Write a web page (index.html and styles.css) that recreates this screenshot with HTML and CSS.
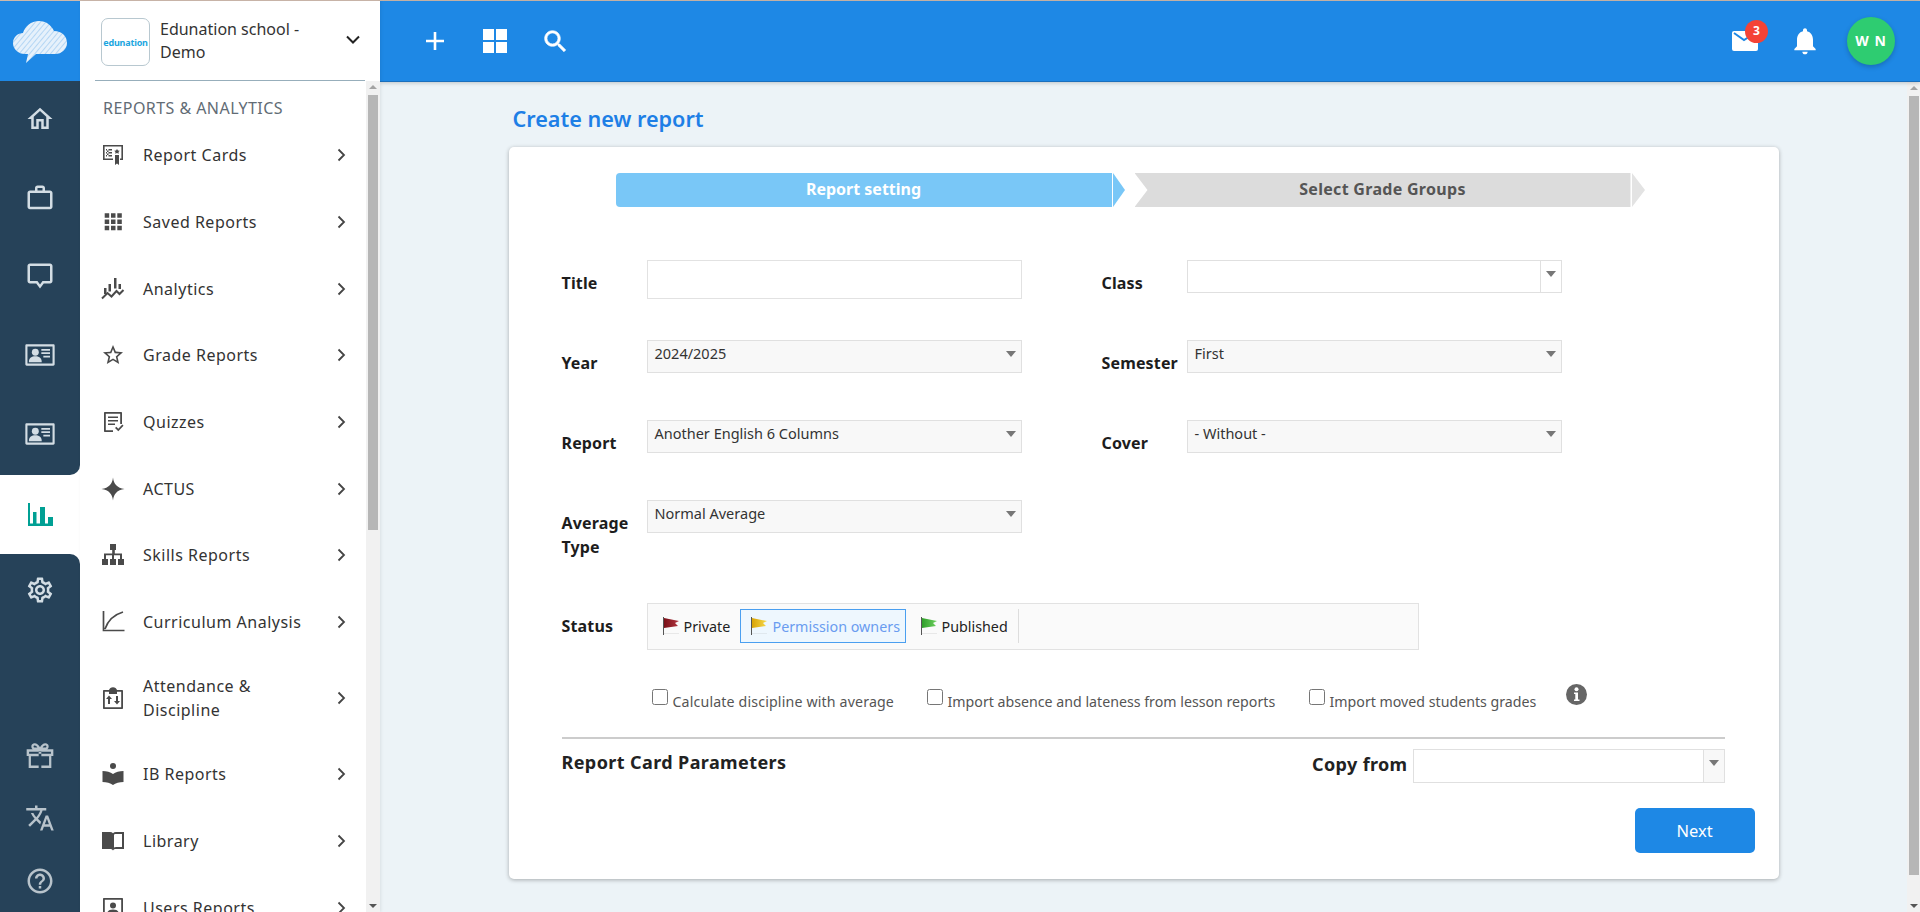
FILE: index.html
```html
<!DOCTYPE html>
<html lang="en">
<head>
<meta charset="utf-8">
<title>Create new report</title>
<link rel="stylesheet" href="styles.css">
</head>
<body>
<div class="topline"></div>
<div class="app">
  <nav class="rail">
    <div class="rail-logo">
      <svg width="56" height="46" viewBox="0 0 56 46"><defs><pattern id="sk" width="4" height="4" patternUnits="userSpaceOnUse" patternTransform="rotate(-50)"><rect width="4" height="4" fill="#e6f1fb"/><rect width="4" height="1" fill="#b4d6f4"/></pattern></defs><path d="M13 36C6 36 1 31 1 25c0-6 5-10 10-10 2-7 8-12 16-12 7 0 12 4 15 10 8 0 13 5 13 12 0 6-5 11-12 11H24l-10 9 2-9z" fill="url(#sk)"/></svg>
    </div>
    <div class="rail-group rail-top">
      <div class="rail-item"><svg class="ri" width="30" height="30" viewBox="0 0 24 24"><path d="M12 5.69l5 4.5V18h-2v-6H9v6H7v-7.81l5-4.5M12 3L2 12h3v8h6v-6h2v6h6v-8h3L12 3z"/></svg></div>
      <div class="rail-item"><svg class="ri" width="30" height="30" viewBox="0 0 24 24"><path d="M14 6V4h-4v2h4zM4 8v11h16V8H4zm16-2c1.11 0 2 .89 2 2v11c0 1.11-.89 2-2 2H4c-1.11 0-2-.89-2-2l.01-11c0-1.11.88-2 1.99-2h4V4c0-1.11.89-2 2-2h4c1.11 0 2 .89 2 2v2h4z"/></svg></div>
      <div class="rail-item"><svg class="ri" width="30" height="30" viewBox="0 0 24 24"><path d="M4 2h16c1.1 0 2 .9 2 2v12c0 1.1-.9 2-2 2h-5l-3 4-3-4H4c-1.1 0-2-.9-2-2V4c0-1.1.9-2 2-2zm0 2v12h6l2 2.7 2-2.7h6V4H4z"/></svg></div>
      <div class="rail-item"><svg class="ri" width="32" height="32" viewBox="0 0 24 24"><path d="M2 4h20c.6 0 1 .4 1 1v14c0 .6-.4 1-1 1H2c-.6 0-1-.4-1-1V5c0-.6.4-1 1-1zm.6 1.6v12.8h18.8V5.6H2.600z"/><circle cx="8.500" cy="10" r="2.600"/><path d="M3.700 17c0-2.600 2.200-4 4.800-4s4.800 1.400 4.800 4v.4H3.700zM13 7.500h6.500v1.300H13zM13 10h6.500v1.300H13zM14.500 12.500h5v1.300h-5z"/></svg></div>
      <div class="rail-item"><svg class="ri" width="32" height="32" viewBox="0 0 24 24"><path d="M2 4h20c.6 0 1 .4 1 1v14c0 .6-.4 1-1 1H2c-.6 0-1-.4-1-1V5c0-.6.4-1 1-1zm.6 1.6v12.8h18.8V5.6H2.600z"/><circle cx="8.500" cy="10" r="2.600"/><path d="M3.700 17c0-2.600 2.200-4 4.800-4s4.800 1.400 4.800 4v.4H3.700zM13 7.500h6.500v1.300H13zM13 10h6.500v1.300H13zM14.500 12.500h5v1.300h-5z"/></svg></div>
    </div>
    <div class="rail-active">
      <svg width="26" height="23" viewBox="0 0 26 23"><path class="teal" d="M1 0h2v20.500h3V9h3.500v11.500H13V4h5v16.500h3V14h5v9H1z"/></svg>
    </div>
    <div class="rail-group rail-bottom">
      <div class="rail-gear"><svg class="ri" width="30" height="30" viewBox="0 0 24 24"><path d="M19.430 12.980c.04-.32.07-.64.07-.98 0-.34-.03-.66-.07-.98l2.110-1.650c.19-.15.24-.42.12-.64l-2-3.460c-.09-.16-.26-.25-.44-.25-.06 0-.12.01-.17.03l-2.490 1c-.52-.4-1.080-.73-1.690-.98l-.38-2.650C14.460 2.180 14.250 2 14 2h-4c-.25 0-.46.18-.49.42l-.38 2.650c-.61.25-1.170.59-1.690.98l-2.490-1c-.06-.02-.12-.03-.18-.03-.17 0-.34.09-.43.25l-2 3.460c-.13.22-.07.49.12.64l2.110 1.650c-.04.32-.07.65-.07.98 0 .33.03.66.07.98l-2.110 1.650c-.19.15-.24.42-.12.64l2 3.460c.09.16.26.25.44.25.06 0 .12-.01.17-.03l2.490-1c.52.4 1.080.73 1.690.98l.38 2.650c.03.24.24.42.49.42h4c.25 0 .46-.18.49-.42l.38-2.650c.61-.25 1.170-.59 1.690-.98l2.490 1c.06.02.12.03.18.03.17 0 .34-.09.43-.25l2-3.460c.12-.22.07-.49-.12-.64l-2.110-1.650zm-1.980-1.710c.04.31.05.52.05.73 0 .21-.02.43-.05.73l-.14 1.130.89.7 1.080.84-.7 1.210-1.270-.51-1.040-.42-.9.68c-.43.32-.84.56-1.250.73l-1.060.43-.16 1.130-.2 1.350h-1.400l-.19-1.350-.16-1.130-1.060-.43c-.43-.18-.83-.41-1.230-.71l-.91-.7-1.060.43-1.270.51-.7-1.210 1.080-.84.89-.7-.14-1.130c-.03-.31-.05-.54-.05-.74s.02-.43.05-.73l.14-1.130-.89-.7-1.080-.84.7-1.210 1.270.51 1.040.42.9-.68c.43-.32.84-.56 1.250-.73l1.060-.43.16-1.130.2-1.350h1.390l.19 1.350.16 1.130 1.060.43c.43.18.83.41 1.230.71l.91.7 1.060-.43 1.270-.51.7 1.210-1.070.85-.89.7.14 1.130zM12 8c-2.210 0-4 1.790-4 4s1.790 4 4 4 4-1.790 4-4-1.790-4-4-4zm0 6c-1.100 0-2-.9-2-2s.9-2 2-2 2 .9 2 2-.9 2-2 2z"/></svg></div>
      <div class="rail-foot">
        <div class="rail-small"><svg class="rs" width="32" height="32" viewBox="0 0 24 24"><path d="M2 7h20v5h-1.500v9h-17v-9H2zm1.800 1.800v1.600h16.400V8.800zm1.400 3.400v7h5.800v-7zm7.800 0v7h5.800v-7zM11 8.500V21h2V8.500zM8 2.500c1.600 0 3.200 1.500 4 3 .8-1.500 2.400-3 4-3 1.500 0 2.500 1 2.500 2.300 0 .9-.4 1.700-1 2.200H6.500c-.6-.5-1-1.300-1-2.200 0-1.300 1-2.300 2.500-2.300zm0 1.700c-.5 0-.8.3-.8.7 0 .5.3.8.8.8h2c-.4-.8-1.200-1.500-2-1.500zm8 0c-.8 0-1.600.7-2 1.500h2c.5 0 .8-.3.8-.8 0-.4-.3-.7-.8-.7z"/></svg></div>
        <div class="rail-small"><svg class="rs" width="30" height="30" viewBox="0 0 24 24"><path d="M12.870 15.070l-2.540-2.510.03-.03c1.740-1.940 2.980-4.170 3.710-6.530H17V4h-7V2H8v2H1v1.990h11.170C11.500 7.920 10.440 9.750 9 11.350 8.070 10.320 7.300 9.190 6.690 8h-2c.73 1.630 1.730 3.170 2.980 4.560l-5.090 5.020L4 19l5-5 3.110 3.110.76-2.040zM18.500 10h-2L12 22h2l1.120-3h4.750L21 22h2l-4.500-12zm-2.620 7l1.620-4.330L19.120 17h-3.240z"/></svg></div>
        <div class="rail-small"><svg class="rs" width="30" height="30" viewBox="0 0 24 24"><path d="M11 18h2v-2h-2v2zm1-16C6.480 2 2 6.480 2 12s4.480 10 10 10 10-4.480 10-10S17.520 2 12 2zm0 18c-4.410 0-8-3.590-8-8s3.590-8 8-8 8 3.590 8 8-3.590 8-8 8zm0-14c-2.210 0-4 1.790-4 4h2c0-1.100.9-2 2-2s2 .9 2 2c0 2-3 1.750-3 5h2c0-2.250 3-2.500 3-5 0-2.210-1.790-4-4-4z"/></svg></div>
      </div>
    </div>
  </nav>

  <aside class="side">
    <div class="side-head">
      <div class="school-logo"><span>edunation</span></div>
      <div class="school-name">Edunation school -<br>Demo</div>
      <svg class="school-caret" width="14" height="9" viewBox="0 0 14 9"><path d="M1 1.500l6 6 6-6" fill="none" stroke="#222" stroke-width="2"/></svg>
    </div>
    <div class="side-rule"></div>
    <div class="side-body">
      <div class="side-list">
        <div class="side-title">REPORTS &amp; ANALYTICS</div>
        <a class="side-item"><svg class="si" viewBox="0 0 24 24"><path d="M2 2h20v15h-3v-1.600h1.400V3.600H3.600v11.800H12V17H2zM5 6h6v1.500H5zm0 3h6v1.500H5zm0 3h6v1.500H5zM6 6v7.500h1.500V6zm10 0l1 1.500 1.800.2-1.300 1.300.3 1.800-1.800-.8-1.800.8.3-1.800L13.200 7.700l1.800-.2zM14 12h4v10l-2-1.500-2 1.500z"/></svg><span class="si-text">Report Cards</span><svg class="chev" viewBox="0 0 9 14"><path d="M1.500 1.500L7 7l-5.500 5.500" /></svg></a>
        <a class="side-item"><svg class="si" viewBox="0 0 24 24"><path d="M3 3h5v5H3zm7 0h5v5h-5zm7 0h5v5h-5zM3 10h5v5H3zm7 0h5v5h-5zm7 0h5v5h-5zM3 17h5v5H3zm7 0h5v5h-5zm7 0h5v5h-5z" transform="translate(1 .5) scale(.9)"/></svg><span class="si-text">Saved Reports</span><svg class="chev" viewBox="0 0 9 14"><path d="M1.500 1.500L7 7l-5.500 5.500" /></svg></a>
        <a class="side-item"><svg class="si" viewBox="0 0 24 24"><path d="M3 11h2.500v6H3zm4.500-4H10v7.500H7.500zM13 1h2.500v10.500H13zm4.500 6H20v5h-2.500z"/><path d="M1 21.500l5.500-5.500 4 3.500 5-5.500 3 3 4-4" fill="none" stroke="#4a4a4a" stroke-width="2"/></svg><span class="si-text">Analytics</span><svg class="chev" viewBox="0 0 9 14"><path d="M1.500 1.500L7 7l-5.500 5.500" /></svg></a>
        <a class="side-item"><svg class="si" viewBox="0 0 24 24"><path d="M22 9.240l-7.190-.62L12 2 9.190 8.630 2 9.240l5.460 4.730L5.820 21 12 17.270 18.180 21l-1.630-7.030L22 9.240zM12 15.400l-3.760 2.270 1-4.280-3.320-2.880 4.380-.38L12 6.100l1.710 4.040 4.380.38-3.320 2.880 1 4.280L12 15.400z"/></svg><span class="si-text">Grade Reports</span><svg class="chev" viewBox="0 0 9 14"><path d="M1.500 1.500L7 7l-5.500 5.500" /></svg></a>
        <a class="side-item"><svg class="si" viewBox="0 0 24 24"><path d="M4 2h16c.6 0 1 .4 1 1v11h-1.800V3.800H4.800v16.400H12V22H4c-.6 0-1-.4-1-1V3c0-.6.4-1 1-1zm3 4.500h10V8H7zm0 3.500h10v1.500H7zm0 3.500h7V15H7zm7 4.500l1.300-1.300 2 2 4-4.200 1.200 1.200-5.200 5.500z"/></svg><span class="si-text">Quizzes</span><svg class="chev" viewBox="0 0 9 14"><path d="M1.500 1.500L7 7l-5.500 5.500" /></svg></a>
        <a class="side-item"><svg class="si" viewBox="0 0 24 24"><path d="M12 .5c.8 6.800 4 10.300 11.500 11.500C16 13.200 12.800 16.700 12 23.500 11.200 16.700 8 13.200.5 12 8 10.800 11.200 7.300 12 .5z"/></svg><span class="si-text">ACTUS</span><svg class="chev" viewBox="0 0 9 14"><path d="M1.500 1.500L7 7l-5.500 5.500" /></svg></a>
        <a class="side-item"><svg class="si" viewBox="0 0 24 24"><path d="M9 1h6v6h-1.200v3.500H21V16h2v6h-6v-6h2v-3.800h-6V16h2v6H9v-6h2v-3.800H5V16h2v6H1v-6h2v-5.500h8.200V7H9z"/></svg><span class="si-text">Skills Reports</span><svg class="chev" viewBox="0 0 9 14"><path d="M1.500 1.500L7 7l-5.500 5.500" /></svg></a>
        <a class="side-item"><svg class="si" viewBox="0 0 24 24"><path d="M2.500 1v19.500H23.500M4 19c3-9 8-14 18-17" fill="none" stroke="#4a4a4a" stroke-width="1.700"/></svg><span class="si-text">Curriculum Analysis</span><svg class="chev" viewBox="0 0 9 14"><path d="M1.500 1.500L7 7l-5.500 5.500" /></svg></a>
        <a class="side-item"><svg class="si" viewBox="0 0 24 24"><path d="M3 4h5c.5-1.700 2-2.800 4-2.800s3.500 1.100 4 2.800h5c.6 0 1 .4 1 1v17c0 .6-.4 1-1 1H3c-.6 0-1-.4-1-1V5c0-.6.4-1 1-1zm.8 1.800v15.400h16.400V5.800H16V8H8V5.800zM7 18v-5H5l3-3.500 3 3.500H9v5zm8-8h2v5h2l-3 3.500-3-3.500h2z"/></svg><span class="si-text">Attendance &amp;<br>Discipline</span><svg class="chev" viewBox="0 0 9 14"><path d="M1.500 1.500L7 7l-5.500 5.500" /></svg></a>
        <a class="side-item"><svg class="si" viewBox="0 0 24 24"><circle cx="12" cy="4" r="3"/><path d="M1.500 9c4 0 8 1 10.500 3 2.500-2 6.500-3 10.500-3v11c-4 0-8 1-10.500 3-2.500-2-6.500-3-10.500-3z"/></svg><span class="si-text">IB Reports</span><svg class="chev" viewBox="0 0 9 14"><path d="M1.500 1.500L7 7l-5.500 5.500" /></svg></a>
        <a class="side-item"><svg class="si" viewBox="0 0 24 24"><path d="M1 3h8c1.300 0 2.300.4 3 1.200C12.700 3.400 13.700 3 15 3h8v17h-8c-1.300 0-2.300.4-3 1.500-.7-1.100-1.700-1.500-3-1.500H1zm12 3v12.500c.6-.3 1.300-.5 2-.5h6V5h-6c-1.200 0-2 .4-2 1z"/></svg><span class="si-text">Library</span><svg class="chev" viewBox="0 0 9 14"><path d="M1.500 1.500L7 7l-5.500 5.500" /></svg></a>
        <a class="side-item"><svg class="si" viewBox="0 0 24 24"><path d="M3 2h18c.6 0 1 .4 1 1v18c0 .6-.4 1-1 1H3c-.6 0-1-.4-1-1V3c0-.6.4-1 1-1zm.8 1.800v16.400h16.400V3.800z"/><circle cx="12" cy="9.500" r="3"/><path d="M6 18c0-3 2.500-4.500 6-4.500s6 1.500 6 4.500z"/></svg><span class="si-text">Users Reports</span><svg class="chev" viewBox="0 0 9 14"><path d="M1.500 1.500L7 7l-5.500 5.500" /></svg></a>
      </div>
      <div class="bar bar-side"><i class="bar-up"></i><i class="bar-thumb"></i><i class="bar-down"></i></div>
    </div>
  </aside>

  <div class="main">
    <header class="top">
      <div class="top-left">
        <div class="top-ico"><svg width="20" height="20" viewBox="0 0 20 20"><path d="M8.700 1h2.600v7.700H19v2.600h-7.700V19H8.700v-7.700H1V8.700h7.700z" fill="#fff"/></svg></div>
        <div class="top-ico"><svg width="24" height="24" viewBox="0 0 24 24"><path d="M0 0h11v11H0zm13 0h11v11H13zM0 13h11v11H0zm13 0h11v11H13z" fill="#fff"/></svg></div>
        <div class="top-ico"><svg width="29" height="29" viewBox="0 0 24 24"><path d="M15.500 14h-.79l-.28-.27C15.410 12.590 16 11.110 16 9.500 16 5.910 13.090 3 9.500 3S3 5.910 3 9.500 5.910 16 9.500 16c1.610 0 3.090-.59 4.230-1.570l.27.28v.79l5 4.990L20.490 19l-4.990-5zm-6 0C7.010 14 5 11.990 5 9.500S7.010 5 9.500 5 14 7.010 14 9.500 11.990 14 9.500 14z" fill="#fff" stroke="#fff" stroke-width=".5"/></svg></div>
      </div>
      <div class="top-right">
        <div class="top-ico mail"><svg width="28" height="22" viewBox="0 0 28 22"><rect x="1" y="1" width="26" height="20" rx="2" fill="#fff"/><path d="M3 3l10 7 8-5" fill="none" stroke="#1e88e5" stroke-width="2"/></svg><span class="badge">3</span></div>
        <div class="top-ico"><svg width="32" height="32" viewBox="0 0 24 24"><path d="M12 22c1.100 0 2-.9 2-2h-4c0 1.100.9 2 2 2zm6-6v-5c0-3.070-1.630-5.640-4.500-6.320V4c0-.83-.67-1.500-1.500-1.500s-1.500.67-1.500 1.500v.68C7.640 5.360 6 7.920 6 11v5l-2 2v1h16v-1l-2-2z" fill="#fff"/></svg></div>
        <div class="avatar">W N</div>
      </div>
    </header>
    <div class="stage">
      <div class="content">
        <h1 class="page-title">Create new report</h1>
        <section class="card">
          <div class="steps">
            <div class="step step-on">Report setting</div><i class="tip tip-on"></i>
            <div class="step step-off">Select Grade Groups</div><i class="tip tip-off"></i>
          </div>
          <div class="form">
            <label class="lbl">Title</label><input class="inp" type="text">
            <span></span>
            <label class="lbl">Class</label><div class="sel sel-combo"><i class="cell"><b class="tri"></b></i></div>

            <label class="lbl">Year</label><div class="sel"><span>2024/2025</span><b class="tri"></b></div>
            <span></span>
            <label class="lbl">Semester</label><div class="sel"><span>First</span><b class="tri"></b></div>

            <label class="lbl">Report</label><div class="sel"><span>Another English 6 Columns</span><b class="tri"></b></div>
            <span></span>
            <label class="lbl">Cover</label><div class="sel"><span>- Without -</span><b class="tri"></b></div>

            <label class="lbl">Average Type</label><div class="sel"><span>Normal Average</span><b class="tri"></b></div>
          </div>
          <div class="status-row">
            <label class="lbl">Status</label>
            <div class="status">
              <div class="flag-btn"><svg width="17" height="18" viewBox="0 0 17 18"><defs><linearGradient id="fr" x1="0" x2="1"><stop offset="0" stop-color="#7a1018"/><stop offset="1" stop-color="#b23540"/></linearGradient></defs><path d="M0 0h1v18H0z" fill="#555"/><path d="M1 1l15 3-4 2 3 3-14 2z" fill="url(#fr)"/><path d="M1 16h15v1H1z" fill="#e8e8e8"/></svg>Private</div>
              <div class="flag-btn flag-on"><svg width="17" height="18" viewBox="0 0 17 18"><defs><linearGradient id="fy" x1="0" x2="1"><stop offset="0" stop-color="#d8a408"/><stop offset="1" stop-color="#f6d84a"/></linearGradient></defs><path d="M0 0h1v18H0z" fill="#555"/><path d="M1 1l15 3-4 2 3 3-14 2z" fill="url(#fy)"/><path d="M1 16h15v1H1z" fill="#e0e8ee"/></svg>Permission owners</div>
              <div class="flag-btn flag-last"><svg width="17" height="18" viewBox="0 0 17 18"><defs><linearGradient id="fg" x1="0" x2="1"><stop offset="0" stop-color="#2f9e2a"/><stop offset="1" stop-color="#6fd060"/></linearGradient></defs><path d="M0 0h1v18H0z" fill="#555"/><path d="M1 1l15 3-4 2 3 3-14 2z" fill="url(#fg)"/><path d="M1 16h15v1H1z" fill="#e8e8e8"/></svg>Published</div>
            </div>
          </div>
          <div class="checks">
            <label class="chk"><input type="checkbox"><span>Calculate discipline with average</span></label>
            <label class="chk"><input type="checkbox"><span>Import absence and lateness from lesson reports</span></label>
            <label class="chk"><input type="checkbox"><span>Import moved students grades</span></label>
            <svg class="info" width="21" height="21" viewBox="0 0 21 21"><circle cx="10.500" cy="10.500" r="10.500" fill="#666"/><circle cx="10.500" cy="5.300" r="2" fill="#fff"/><path d="M8 8.500h4v7h1.500V17h-5.500v-1.500h1.300V10H8z" fill="#fff"/></svg>
          </div>
          <div class="params">
            <h2 class="params-title">Report Card Parameters</h2>
            <div class="copy">
              <label class="copy-lbl">Copy from</label>
              <div class="sel sel-copy"><i class="cell cell-grey"><b class="tri"></b></i></div>
            </div>
          </div>
          <div class="actions"><button class="next" type="button">Next</button></div>
        </section>
      </div>
      <div class="bar bar-main"><i class="bar-up"></i><i class="bar-thumb"></i><i class="bar-down"></i></div>
    </div>
  </div>
</div>
</body>
</html>
```
FILE: styles.css
```css
* { box-sizing: border-box; }
html, body { margin: 0; height: 912px; overflow: hidden; }
body { font-family: "Noto Sans", "Open Sans", sans-serif; color: #333; background: #ecf3f7; }
.topline { height: 1px; background: #cdb9ac; }
.app { display: flex; height: 911px; }

/* rail */
.rail { width: 80px; flex: none; display: flex; flex-direction: column; background: #fff; }
.rail-logo { height: 80px; flex: none; background: #1e88e5; display: flex; align-items: center; justify-content: center; }
.rail-group { background: #264259; }
.rail-top { height: 394px; flex: none; border-bottom-right-radius: 10px; }
.rail-item { height: 78.8px; display: flex; align-items: center; justify-content: center; padding-bottom: 3px; }
.ri { fill: #d3dde4; }
.rs { fill: #b8c3cb; }
.rail-active { height: 79px; flex: none; display: flex; align-items: center; justify-content: center; }
.teal { fill: #00a094; }
.rail-bottom { flex: 1; border-top-right-radius: 10px; display: flex; flex-direction: column; }
.rail-gear { height: 72px; display: flex; align-items: center; justify-content: center; }
.rail-foot { margin-top: auto; }
.rail-small { height: 62.5px; display: flex; align-items: center; justify-content: center; }

/* sidebar */
.side { width: 300px; flex: none; background: #fff; display: flex; flex-direction: column; position: relative; z-index: 2; box-shadow: 1px 0 3px rgba(0,0,0,.08); }
.side-head { height: 79px; flex: none; display: flex; align-items: center; padding: 0 20px 0 21px; }
.school-logo { width: 49px; height: 48px; flex: none; border: 1px solid #b8c8d0; border-radius: 7px; display: flex; align-items: center; justify-content: center; margin-top: 3px; }
.school-logo span { font: 700 9px/1 "Noto Sans", sans-serif; color: #1ba6e0; letter-spacing: -.2px; }
.school-name { margin-left: 10px; flex: 1; font-size: 16px; line-height: 23px; color: #333; margin-top: 0; }
.school-caret { flex: none; margin-top: -2px; }
.side-rule { height: 1px; flex: none; margin: 0 15px; background: #97aebb; }
.side-body { flex: 1; display: flex; min-height: 0; }
.side-list { flex: 1; min-width: 0; overflow: hidden; padding-left: 23px; }
.side-title { height: 41px; padding-top: 15px; font-size: 16px; letter-spacing: .45px; line-height: 24px; color: #626c75; white-space: nowrap; }
.side-item { display: flex; align-items: center; min-height: 66.7px; padding: 18.700px 0; color: #333; font-size: 16px; letter-spacing: .5px; line-height: 24px; }
.si { width: 24px; height: 24px; flex: none; fill: #4a4a4a; margin-left: -2px; }
.si-text { margin-left: 18px; flex: 1; }
.chev { width: 9px; height: 14px; flex: none; margin-right: 20px; fill: none; stroke: #444; stroke-width: 1.800; }

/* scrollbars */
.bar { flex: none; display: flex; flex-direction: column; align-items: center; background: #f1f1f1; }
.bar-side { width: 14px; }
.bar-main { width: 13px; }
.bar-up { flex: none; width: 0; height: 4px; margin-top: 4px; margin-bottom: 5px; border: 4px solid transparent; border-top: 0; border-bottom: 4px solid #a3a3a3; }
.bar-thumb { flex: none; width: 10px; background: #b6b6b6; margin-top: 1px; }
.bar-side .bar-thumb { height: 435px; }
.bar-main .bar-thumb { height: 779px; }
.bar-down { margin-top: auto; margin-bottom: 4px; width: 0; height: 4px; border: 4px solid transparent; border-bottom: 0; border-top: 4px solid #555; }

/* top bar */
.main { flex: 1; min-width: 0; display: flex; flex-direction: column; }
.top { height: 81px; flex: none; background: #1e88e5; border-bottom: 1px solid #1a6fbd; display: flex; align-items: center; justify-content: space-between; padding: 0 25px; box-shadow: 0 1px 4px rgba(0,0,0,.2); position: relative; z-index: 1; }
.top-left, .top-right { display: flex; align-items: center; }
.top-ico { width: 60px; height: 60px; display: flex; align-items: center; justify-content: center; position: relative; }
.badge { position: absolute; left: 30px; top: 9px; width: 23px; height: 23px; border-radius: 50%; background: #f44336; color: #fff; font-size: 12px; font-weight: 700; line-height: 22px; text-align: center; }
.avatar { width: 48px; height: 48px; border-radius: 50%; margin-left: 12px; background: #2ecc71; color: #fff; font-size: 14px; font-weight: 700; letter-spacing: 1px; line-height: 48px; text-align: center; box-shadow: 0 2px 5px rgba(0,0,0,.2); }

/* content */
.stage { flex: 1; display: flex; min-height: 0; }
.content { flex: 1; min-width: 0; }
.page-title { width: 1270px; margin: 21px auto 12px; padding-left: 4px; font-size: 21.600px; line-height: 32px; font-weight: 600; color: #1e7fe6; }
.card { width: 1270px; height: 732px; margin: 0 auto; background: #fff; border-radius: 5px; box-shadow: 0 1px 4px rgba(0,0,0,.3); padding: 26px 0 0 53px; }
.steps { display: flex; align-items: center; height: 34px; margin-left: 54px; }
.step { width: 496px; height: 34px; line-height: 33px; text-align: center; font-size: 16px; font-weight: 700; }
.step-on { background: #79c7f7; color: #fff; border-radius: 4px 0 0 4px; }
.step-off { background: #dcdcdc; color: #555; letter-spacing: .3px; clip-path: polygon(0 0, 100% 0, 100% 100%, 0 100%, 13px 50%); }
.tip { display: block; width: 0; height: 0; border-top: 17px solid transparent; border-bottom: 17px solid transparent; margin-left: 1px; }
.tip-on { border-left: 12px solid #79c7f7; margin-right: 10px; }
.tip-off { border-left: 13px solid #e3e3e3; }

.form { display: grid; grid-template-columns: 85px 375px 80px 85px 375px; grid-auto-rows: 80px; margin-top: 53px; height: 343px; align-items: start; }
.lbl { padding-top: 11px; font-size: 16px; letter-spacing: .15px; line-height: 24px; font-weight: 700; color: #1d1d1d; }
.inp { width: 375px; height: 39px; border: 1px solid #e2e2e2; background: #fff; display: block; margin: 0; padding: 0 6px; }
.sel { width: 375px; height: 33px; border: 1px solid #e0e0e0; background: #f8f8f8; padding: 0 7px; font-size: 14.500px; line-height: 24px; color: #333; position: relative; display: flex; }
.tri { position: absolute; right: 5px; top: 10px; width: 0; height: 0; border: 5px solid transparent; border-bottom: 0; border-top: 6px solid #777; }
.sel-combo { background: #fff; }
.cell { position: absolute; right: 0; top: 0; bottom: 0; width: 21px; border-left: 1px solid #e0e0e0; }
.cell .tri { right: 5px; }
.cell-grey { background: #f8f8f8; }

.status-row { display: grid; grid-template-columns: 85px auto; }
.status { width: 772px; height: 47px; border: 1px solid #e2e2e2; background: #fafafa; padding: 5px 0 0 12px; display: flex; }
.flag-btn { height: 34px; display: flex; align-items: center; gap: 4px; padding: 0 0 0 3px; font-size: 14.300px; color: #222; white-space: nowrap; }
.flag-btn svg { flex: none; }
.flag-btn:first-child { width: 80px; }
.flag-on { width: 166px; padding-left: 10px; gap: 5px; border: 1px solid #4a9ff0; background: #eef7fe; color: #6a9cf0; }
.flag-last { width: 113px; padding-left: 15px; gap: 4px; border-right: 1px solid #ddd; }
.checks { display: grid; grid-template-columns: 275px 382px 257px auto; margin: 39px 0 0 90px; align-items: start; height: 48px; }
.chk { display: flex; align-items: flex-start; gap: 5px; font-size: 14.200px; line-height: 20px; color: #555; }
.chk:first-child { letter-spacing: .15px; }
.chk input { width: 16px; height: 16px; margin: 0; flex: none; }
.chk span { padding-top: 3px; white-space: nowrap; }
.info { margin-top: -5px; }
.params { width: 1163px; border-top: 2px solid #ccc; display: flex; justify-content: space-between; align-items: flex-start; padding-top: 10px; }
.params-title { margin: 1px 0 0; font-size: 18px; letter-spacing: .4px; line-height: 24px; font-weight: 700; color: #222; }
.copy { display: flex; align-items: flex-start; }
.copy-lbl { padding-top: 3px; font-size: 18px; letter-spacing: .35px; line-height: 24px; font-weight: 700; color: #222; margin-right: 5px; }
.sel-copy { width: 312px; height: 34px; background: #fff; }
.actions { display: flex; justify-content: flex-end; width: 1193px; margin-top: 25px; }
.next { width: 120px; height: 45px; border: 0; border-radius: 5px; background: #1e88e5; color: #fff; font: 400 16.500px "Noto Sans", sans-serif; }
```
